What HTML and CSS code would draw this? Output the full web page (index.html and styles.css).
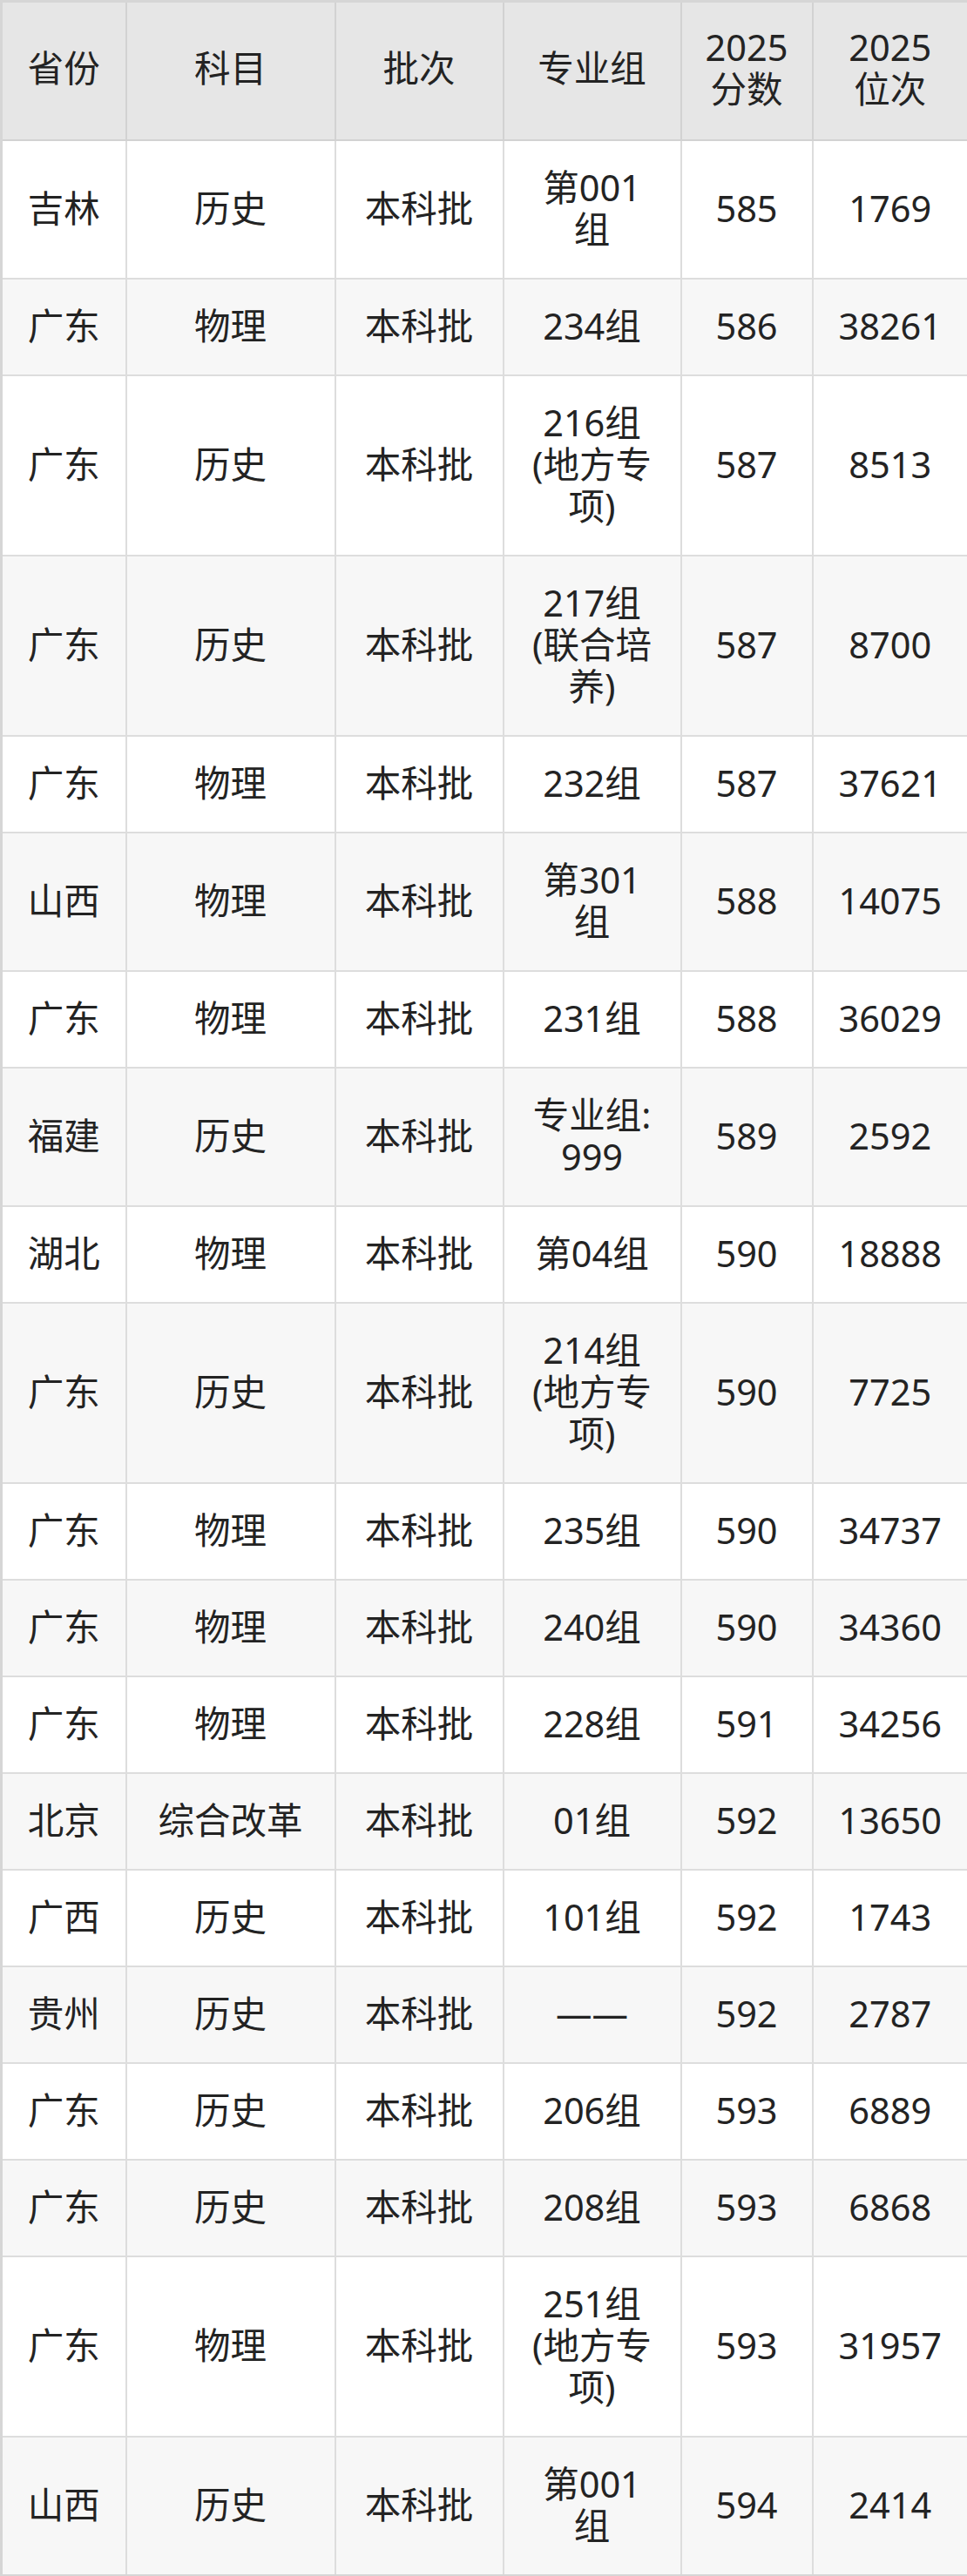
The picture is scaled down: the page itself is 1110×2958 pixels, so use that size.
FILE: index.html
```html
<!DOCTYPE html>
<html lang="zh-CN">
<head>
<meta charset="utf-8">
<title>录取分数</title>
<link rel="stylesheet" href="styles.css">
</head>
<body>
<table class="score-table">
  <colgroup>
    <col class="c-prov">
    <col class="c-subj">
    <col class="c-batch">
    <col class="c-group">
    <col class="c-score">
    <col class="c-rank">
  </colgroup>
  <thead>
    <tr>
      <th>省份</th>
      <th>科目</th>
      <th>批次</th>
      <th>专业组</th>
      <th>2025<br>分数</th>
      <th>2025<br>位次</th>
    </tr>
  </thead>
  <tbody>
    <tr><td>吉林</td><td>历史</td><td>本科批</td><td>第001<br>组</td><td>585</td><td>1769</td></tr>
    <tr><td>广东</td><td>物理</td><td>本科批</td><td>234组</td><td>586</td><td>38261</td></tr>
    <tr><td>广东</td><td>历史</td><td>本科批</td><td>216组<br>(地方专<br>项)</td><td>587</td><td>8513</td></tr>
    <tr><td>广东</td><td>历史</td><td>本科批</td><td>217组<br>(联合培<br>养)</td><td>587</td><td>8700</td></tr>
    <tr><td>广东</td><td>物理</td><td>本科批</td><td>232组</td><td>587</td><td>37621</td></tr>
    <tr><td>山西</td><td>物理</td><td>本科批</td><td>第301<br>组</td><td>588</td><td>14075</td></tr>
    <tr><td>广东</td><td>物理</td><td>本科批</td><td>231组</td><td>588</td><td>36029</td></tr>
    <tr><td>福建</td><td>历史</td><td>本科批</td><td>专业组:<br>999</td><td>589</td><td>2592</td></tr>
    <tr><td>湖北</td><td>物理</td><td>本科批</td><td>第04组</td><td>590</td><td>18888</td></tr>
    <tr><td>广东</td><td>历史</td><td>本科批</td><td>214组<br>(地方专<br>项)</td><td>590</td><td>7725</td></tr>
    <tr><td>广东</td><td>物理</td><td>本科批</td><td>235组</td><td>590</td><td>34737</td></tr>
    <tr><td>广东</td><td>物理</td><td>本科批</td><td>240组</td><td>590</td><td>34360</td></tr>
    <tr><td>广东</td><td>物理</td><td>本科批</td><td>228组</td><td>591</td><td>34256</td></tr>
    <tr><td>北京</td><td>综合改革</td><td>本科批</td><td>01组</td><td>592</td><td>13650</td></tr>
    <tr><td>广西</td><td>历史</td><td>本科批</td><td>101组</td><td>592</td><td>1743</td></tr>
    <tr><td>贵州</td><td>历史</td><td>本科批</td><td>——</td><td>592</td><td>2787</td></tr>
    <tr><td>广东</td><td>历史</td><td>本科批</td><td>206组</td><td>593</td><td>6889</td></tr>
    <tr><td>广东</td><td>历史</td><td>本科批</td><td>208组</td><td>593</td><td>6868</td></tr>
    <tr><td>广东</td><td>物理</td><td>本科批</td><td>251组<br>(地方专<br>项)</td><td>593</td><td>31957</td></tr>
    <tr><td>山西</td><td>历史</td><td>本科批</td><td>第001<br>组</td><td>594</td><td>2414</td></tr>
  </tbody>
</table>
</body>
</html>
```

FILE: styles.css
```css
html, body {
  margin: 0;
  padding: 0;
  background: #ffffff;
}

.score-table {
  width: 1110px;
  table-layout: fixed;
  border-collapse: collapse;
  border: 3px solid #d6d6d6;
  font-family: "Noto Sans", "Noto Sans CJK SC", sans-serif;
  font-size: 41.5px;
  line-height: 48px;
  color: #232323;
}

.c-prov { width: 143px; }
.c-subj { width: 240px; }
.c-batch { width: 193px; }
.c-group { width: 204px; }
.c-score { width: 151px; }
.c-rank { width: 179px; }

.score-table th,
.score-table td {
  text-align: center;
  vertical-align: middle;
  font-weight: 400;
}

.score-table th {
  padding: 27px 4px 34px;
  background: #e6e6e6;
  border: 2px solid #d2d2d2;
}

.score-table td {
  padding: 29px 4px 32px;
  border: 2px solid #dddddd;
}

.score-table tbody tr:nth-child(odd) td {
  background: #ffffff;
}

.score-table tbody tr:nth-child(even) td {
  background: #f7f7f7;
}
```
